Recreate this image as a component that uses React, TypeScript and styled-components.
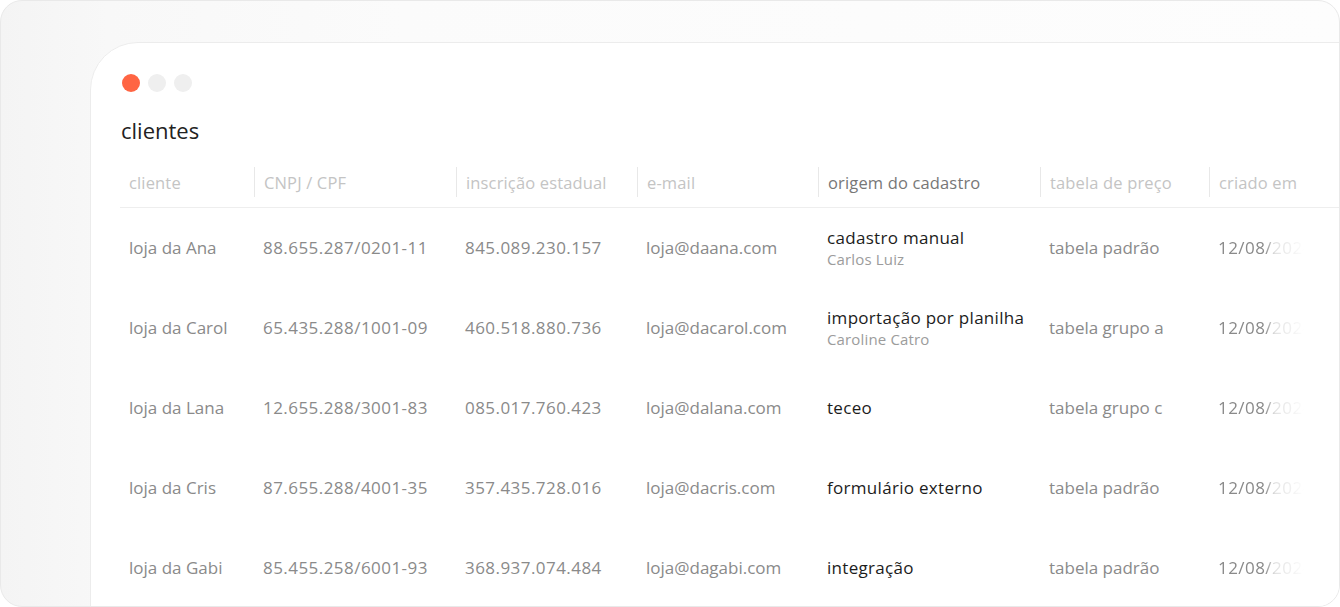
import React from "react";
import styled, { createGlobalStyle } from "styled-components";

const GlobalStyle = createGlobalStyle`
  html, body { margin: 0; padding: 0; background: #ffffff; }
  body { font-family: "Open Sans", "Noto Sans", sans-serif; -webkit-font-smoothing: antialiased; }
  * { box-sizing: border-box; }
`;

const Frame = styled.div`
  width: 1340px;
  height: 607px;
  border: 1px solid #e9e9e9;
  border-radius: 22px;
  overflow: hidden;
  background: linear-gradient(90deg, #f4f4f4 0%, #f8f8f8 8%, #fbfbfb 30%, #fdfdfd 100%);
  padding: 41px 0 0 89px;
`;

const Window = styled.div`
  width: 1300px;
  height: 620px;
  background: #ffffff;
  border: 1px solid #ececec;
  border-radius: 48px 48px 0 0;
  padding: 31px 0 0 29px;
`;

const Dots = styled.div`
  display: flex;
  gap: 8px;
  padding-left: 2px;
`;

const Dot = styled.span<{ $active?: boolean }>`
  width: 18px;
  height: 18px;
  border-radius: 50%;
  background: ${(p) => (p.$active ? "#ff6543" : "#efefef")};
`;

const Title = styled.h1`
  margin: 24px 0 0 1px;
  font-size: 22px;
  line-height: 28px;
  font-weight: 500;
  color: #222222;
`;

const Table = styled.div`
  margin-top: 16px;
  display: grid;
  grid-template-columns: 134px 202px 181px 181px 222px 169px 200px;
`;

const HeadCell = styled.div`
  height: 48px;
  padding: 7px 0 11px 0;
  border-bottom: 1px solid #eeeeee;
`;

const HeadInner = styled.div<{ $first?: boolean; $strong?: boolean }>`
  height: 30px;
  display: flex;
  align-items: center;
  padding-left: 9px;
  border-left: ${(p) => (p.$first ? "none" : "1px solid #e8e8e8")};
  font-size: 16.5px;
  letter-spacing: 0.15px;
  color: ${(p) => (p.$strong ? "#777777" : "#c4c4c4")};
  white-space: nowrap;
`;

const Cell = styled.div<{ $num?: boolean; $fade?: boolean }>`
  height: 80px;
  display: flex;
  flex-direction: column;
  justify-content: center;
  padding-left: 9px;
  font-size: 17px;
  line-height: 20px;
  letter-spacing: ${(p) => (p.$num ? "0.45px" : "0px")};
  color: #8a8a8a;
  white-space: nowrap;
  ${(p) =>
    p.$fade
      ? `-webkit-mask-image: linear-gradient(90deg, #000 0px, #000 56px, rgba(0,0,0,0.25) 66px, rgba(0,0,0,0.1) 85px, transparent 95px);
         mask-image: linear-gradient(90deg, #000 0px, #000 56px, rgba(0,0,0,0.25) 66px, rgba(0,0,0,0.1) 85px, transparent 95px);`
      : ""}
`;

const OriginMain = styled.span`
  font-size: 17px;
  line-height: 20px;
  letter-spacing: 0.3px;
  font-weight: 500;
  color: #1c1c1c;
`;

const OriginSub = styled.span`
  margin-top: 2px;
  font-size: 15px;
  line-height: 18px;
  letter-spacing: 0.15px;
  color: #9c9c9c;
`;

const headers = [
  "cliente",
  "CNPJ / CPF",
  "inscrição estadual",
  "e-mail",
  "origem do cadastro",
  "tabela de preço",
  "criado em",
];

const rows = [
  { c: "loja da Ana", doc: "88.655.287/0201-11", ie: "845.089.230.157", mail: "loja@daana.com", origin: "cadastro manual", by: "Carlos Luiz", table: "tabela padrão" },
  { c: "loja da Carol", doc: "65.435.288/1001-09", ie: "460.518.880.736", mail: "loja@dacarol.com", origin: "importação por planilha", by: "Caroline Catro", table: "tabela grupo a" },
  { c: "loja da Lana", doc: "12.655.288/3001-83", ie: "085.017.760.423", mail: "loja@dalana.com", origin: "teceo", by: "", table: "tabela grupo c" },
  { c: "loja da Cris", doc: "87.655.288/4001-35", ie: "357.435.728.016", mail: "loja@dacris.com", origin: "formulário externo", by: "", table: "tabela padrão" },
  { c: "loja da Gabi", doc: "85.455.258/6001-93", ie: "368.937.074.484", mail: "loja@dagabi.com", origin: "integração", by: "", table: "tabela padrão" },
];

export default function App() {
  return (
    <>
      <GlobalStyle />
      <Frame>
        <Window>
          <Dots>
            <Dot $active />
            <Dot />
            <Dot />
          </Dots>
          <Title>clientes</Title>
          <Table>
            {headers.map((h, i) => (
              <HeadCell key={h}>
                <HeadInner $first={i === 0} $strong={i === 4}>{h}</HeadInner>
              </HeadCell>
            ))}
            {rows.map((r) => (
              <React.Fragment key={r.c}>
                <Cell>{r.c}</Cell>
                <Cell $num>{r.doc}</Cell>
                <Cell $num>{r.ie}</Cell>
                <Cell>{r.mail}</Cell>
                <Cell>
                  <OriginMain>{r.origin}</OriginMain>
                  {r.by && <OriginSub>{r.by}</OriginSub>}
                </Cell>
                <Cell>{r.table}</Cell>
                <Cell $num $fade>12/08/2024</Cell>
              </React.Fragment>
            ))}
          </Table>
        </Window>
      </Frame>
    </>
  );
}
